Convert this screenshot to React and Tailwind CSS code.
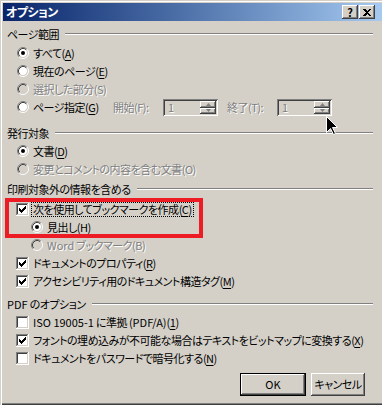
import React from 'react'

// classic 3D borders
const sunken = 'shadow-[inset_1px_1px_0_#808080,inset_-1px_-1px_0_#ffffff,inset_2px_2px_0_#404040,inset_-2px_-2px_0_#d4d0c8]'
const raised = 'shadow-[inset_-1px_-1px_0_#404040,inset_1px_1px_0_#ffffff,inset_-2px_-2px_0_#808080,inset_2px_2px_0_#d4d0c8]'
const grayText = 'text-[#808080] [text-shadow:1px_1px_0_#ffffff]'

function Radio({ checked, disabled }) {
  return (
    <svg width="12" height="12" viewBox="0 0 12 12" className="shrink-0">
      <circle cx="6" cy="6" r="4.2" fill={disabled ? '#d4d0c8' : '#ffffff'} />
      <path d="M2.11 9.89 A5.5 5.5 0 0 1 9.89 2.11" stroke="#808080" fill="none" />
      <path d="M9.89 2.11 A5.5 5.5 0 0 1 2.11 9.89" stroke="#ffffff" fill="none" />
      <path d="M2.82 9.18 A4.5 4.5 0 0 1 9.18 2.82" stroke="#404040" fill="none" />
      <path d="M9.18 2.82 A4.5 4.5 0 0 1 2.82 9.18" stroke="#d4d0c8" fill="none" />
      {checked && <circle cx="6" cy="6" r="2" fill={disabled ? '#808080' : '#000000'} />}
    </svg>
  )
}

function Check({ checked }) {
  return (
    <svg width="13" height="13" viewBox="0 0 13 13" className="shrink-0" shapeRendering="crispEdges">
      <rect x="2" y="2" width="9" height="9" fill="#ffffff" />
      <path d="M0.5 12 V0.5 H12" stroke="#808080" fill="none" />
      <path d="M1.5 11 V1.5 H11" stroke="#404040" fill="none" />
      <path d="M0 12.5 H12.5 V0" stroke="#ffffff" fill="none" />
      <path d="M1 11.5 H11.5 V1" stroke="#d4d0c8" fill="none" />
      {checked && (
        <path
          transform="translate(3 3)"
          d="M0 2 H1 V3 H2 V4 H3 V3 H4 V2 H5 V1 H6 V0 H7 V3 H6 V4 H5 V5 H4 V6 H3 V7 H2 V6 H1 V5 H0 Z"
          fill="#000000"
        />
      )}
    </svg>
  )
}

function Key({ k }) {
  return (
    <>
      (<u className="underline-offset-[2px]">{k}</u>)
    </>
  )
}

// latin runs keep normal spacing
function L({ children }) {
  return <span className="tracking-normal">{children}</span>
}

function GroupHeader({ label, className = '' }) {
  return (
    <div className={`flex h-[18px] items-center pl-[4px] ${className}`}>
      <span className="whitespace-nowrap">{label}</span>
      <div className="ml-[6px] h-[2px] flex-1 border-t border-b border-t-[#808080] border-b-white" />
    </div>
  )
}

function Row({ indent = 'pl-[14px]', children, className = '' }) {
  return <div className={`flex h-[18px] items-center gap-[4px] whitespace-nowrap ${indent} ${className}`}>{children}</div>
}

function Spin() {
  return (
    <div className={`relative flex h-[17px] w-[55px] shrink-0 items-center bg-[#d4d0c8] pl-[5px] ${sunken}`}>
      <span className={`flex-1 ${grayText}`}>1</span>
      <div className="mr-[2px] flex h-[13px] w-[16px] flex-col">
        <div className={`flex h-[7px] items-center justify-center bg-[#d4d0c8] ${raised}`}>
          <svg width="5" height="3" viewBox="0 0 5 3"><path d="M2.5 0 L5 3 H0 Z" fill="#808080" /></svg>
        </div>
        <div className={`flex h-[6px] items-center justify-center bg-[#d4d0c8] ${raised}`}>
          <svg width="5" height="3" viewBox="0 0 5 3"><path d="M0 0 H5 L2.5 3 Z" fill="#808080" /></svg>
        </div>
      </div>
    </div>
  )
}

export default function App() {
  return (
    <div
      className="relative h-[405px] w-[382px] overflow-hidden bg-[#d4d0c8] pl-[3px] pt-[3px] text-[11px] leading-none tracking-[-0.5px] text-black shadow-[inset_1px_1px_0_#d4d0c8,inset_2px_2px_0_#ffffff,inset_0_-1px_0_#404040,inset_0_-2px_0_#808080] [font-feature-settings:'palt'] font-['Noto_Sans_CJK_JP','Noto_Sans',sans-serif]"
    >
      {/* Title bar */}
      <div className="flex h-[18px] items-center justify-between bg-linear-to-r from-[#0a246a] to-[#a6caf0] pl-[3px] pr-[7px]">
        <span className="text-[12px] font-bold text-white">オプション</span>
        <div className="flex gap-[1px]">
          <div className={`flex h-[14px] w-[16px] items-center justify-center bg-[#d4d0c8] text-[11px] font-bold tracking-normal ${raised}`}>?</div>
          <div className={`flex h-[14px] w-[16px] items-center justify-center bg-[#d4d0c8] ${raised}`}>
            <svg width="8" height="7" viewBox="0 0 8 7" shapeRendering="crispEdges">
              <path d="M0 0 H2 L4 2 L6 0 H8 L5 3.5 L8 7 H6 L4 5 L2 7 H0 L3 3.5 Z" fill="#000000" />
            </svg>
          </div>
        </div>
      </div>

      <div className="flex flex-col pr-[9px] pt-[4px]">
        {/* ページ範囲 */}
        <GroupHeader label="ページ範囲" />
        <div className="mt-[1px] flex flex-col">
          <Row><Radio checked /><span>すべて<Key k="A" /></span></Row>
          <Row><Radio /><span>現在のページ<Key k="E" /></span></Row>
          <Row><Radio disabled /><span className={grayText}>選択した部分(S)</span></Row>
          <Row>
            <Radio />
            <span className="w-[76px]">ページ指定<Key k="G" /></span>
            <span className={`w-[46px] ${grayText}`}>開始(F):</span>
            <Spin />
            <span className={`ml-[5px] w-[46px] ${grayText}`}>終了(T):</span>
            <Spin />
          </Row>
        </div>

        {/* 発行対象 */}
        <GroupHeader label="発行対象" className="mt-[8px]" />
        <Row><Radio checked /><span>文書<Key k="D" /></span></Row>
        <Row><Radio disabled /><span className={grayText}>変更とコメントの内容を含む文書(O)</span></Row>

        {/* 印刷対象外の情報を含める */}
        <GroupHeader label="印刷対象外の情報を含める" className="mt-[2px]" />
        <Row indent="pl-[13px]" className="mt-[2px]">
          <Check checked />
          <span className="-ml-[2px] border border-dotted border-black px-[1px] py-[1px]">次を使用してブックマークを作成<Key k="C" /></span>
        </Row>
        <Row indent="pl-[28px]"><Radio checked /><span>見出し<Key k="H" /></span></Row>
        <Row indent="pl-[28px]"><Radio disabled /><span className={grayText}><L>Word</L> ブックマーク(B)</span></Row>
        <Row indent="pl-[13px]"><Check checked /><span>ドキュメントのプロパティ<Key k="R" /></span></Row>
        <Row indent="pl-[13px]"><Check checked /><span>アクセシビリティ用のドキュメント構造タグ<Key k="M" /></span></Row>

        {/* PDF のオプション */}
        <GroupHeader label={<><L>PDF</L> のオプション</>} className="mt-[5px]" />
        <Row indent="pl-[13px]"><Check /><span><L>ISO 19005-1</L> に準拠 <L>(PDF/A)</L><Key k="1" /></span></Row>
        <Row indent="pl-[13px]"><Check checked /><span>フォントの埋め込みが不可能な場合はテキストをビットマップに変換する<Key k="X" /></span></Row>
        <Row indent="pl-[13px]"><Check /><span>ドキュメントをパスワードで暗号化する<Key k="N" /></span></Row>

        {/* Buttons */}
        <div className="mr-[8px] mt-[6px] flex justify-end gap-[5px] whitespace-nowrap">
          <div className="h-[23px] w-[66px] border border-black">
            <div className={`flex h-full items-center justify-center bg-[#d4d0c8] tracking-normal ${raised}`}>OK</div>
          </div>
          <div className={`flex h-[23px] w-[54px] items-center justify-center bg-[#d4d0c8] ${raised}`}>キャンセル</div>
        </div>
      </div>

      {/* red annotation box */}
      <div className="pointer-events-none absolute left-[5px] top-[198px] h-[40px] w-[198px] border-[4px] border-[#ed1c24]" />

      {/* mouse cursor */}
      <svg className="pointer-events-none absolute left-[326px] top-[116px]" width="13" height="20" viewBox="0 0 13 20">
        <path d="M0.5 0.5 L0.5 16.5 L4.5 12.5 L7.5 18.5 L9.5 17.5 L6.5 11.5 L11.5 11.5 Z" fill="#000000" stroke="#ffffff" />
      </svg>
    </div>
  )
}
